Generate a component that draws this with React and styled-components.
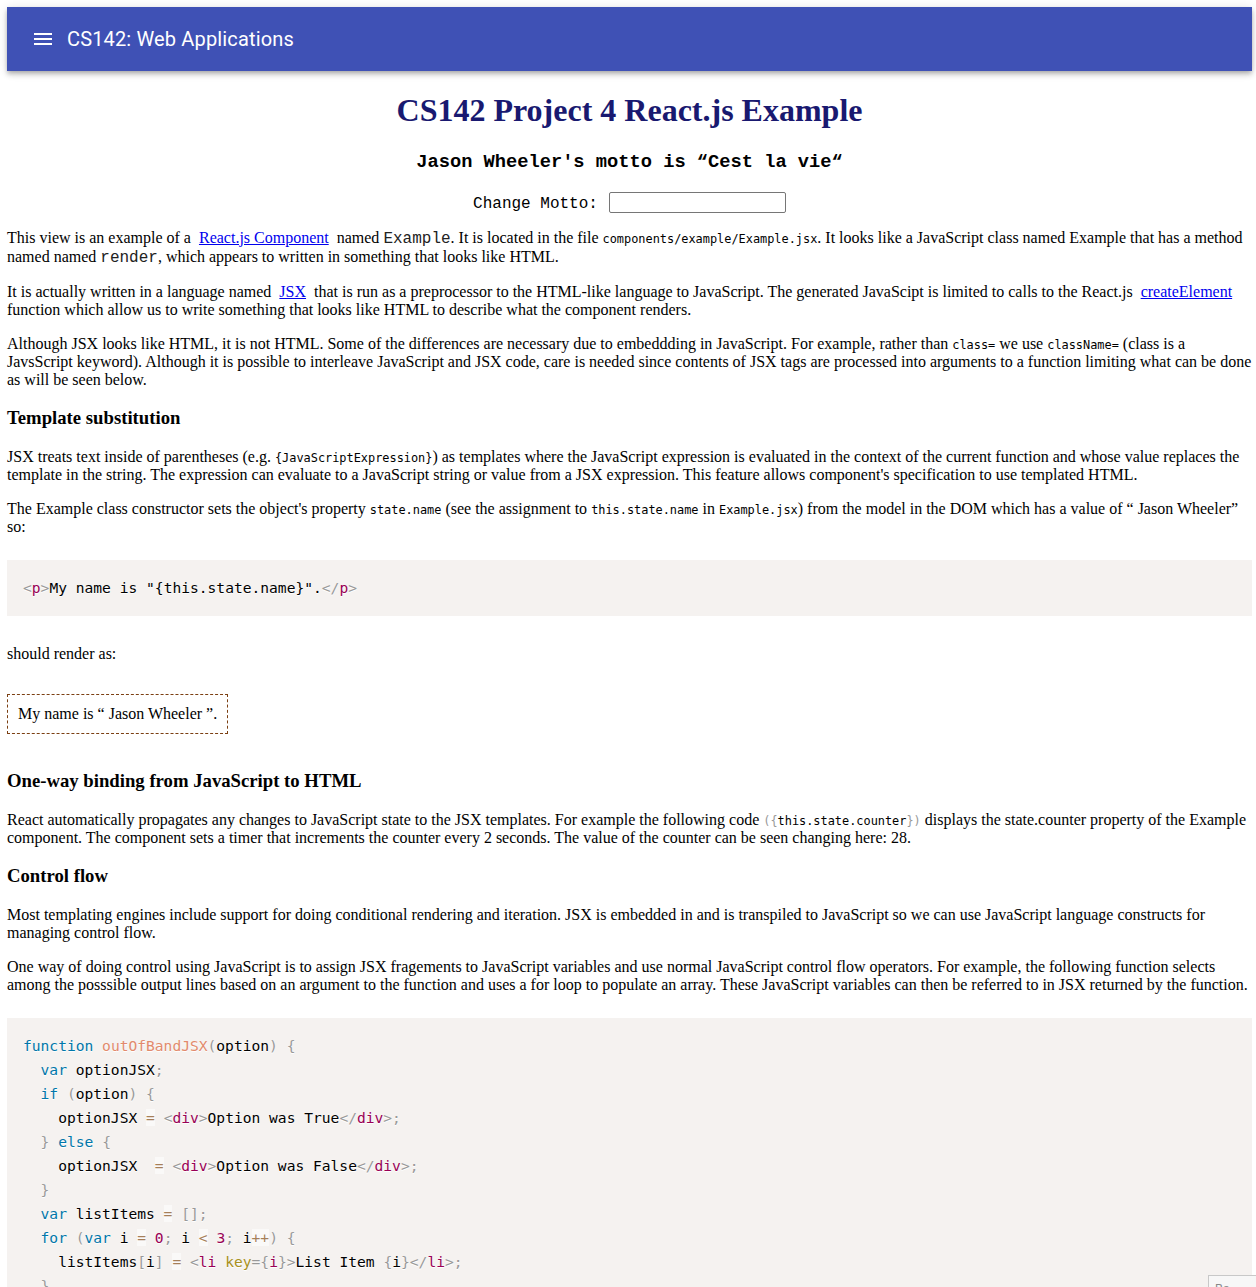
import React from "react";
import styled, { createGlobalStyle } from "styled-components";

const GlobalStyle = createGlobalStyle`
  html, body {
    margin: 0;
    padding: 0;
    background: #fff;
  }
  body {
    font-family: "Liberation Serif", "Times New Roman", serif;
    font-size: 16px;
    color: #000;
  }
`;

const Page = styled.div`
  padding: 7px 4px 0 7px;
`;

const AppBar = styled.header`
  display: flex;
  align-items: center;
  height: 64px;
  padding: 0 24px;
  background: #3f51b5;
  color: #fff;
  box-shadow: 0 2px 4px -1px rgba(0, 0, 0, 0.2), 0 4px 5px 0 rgba(0, 0, 0, 0.14),
    0 1px 10px 0 rgba(0, 0, 0, 0.12);
`;

const MenuIcon = styled.svg`
  width: 24px;
  height: 24px;
  margin-right: 12px;
  fill: #fff;
`;

const AppTitle = styled.h6`
  margin: 0;
  font-family: Roboto, "Liberation Sans", sans-serif;
  font-size: 20px;
  font-weight: 400;
  letter-spacing: 0.15px;
`;

const Title = styled.h1`
  margin: 21.44px 0;
  font-size: 32px;
  font-weight: bold;
  text-align: center;
  color: #191970;
`;

const Motto = styled.h3`
  margin: 18.72px 0;
  font-family: "Liberation Mono", "Courier New", monospace;
  font-size: 18.72px;
  font-weight: bold;
  text-align: center;
`;

const MottoRow = styled.div`
  display: flex;
  justify-content: center;
  align-items: center;
  gap: 11px;
  font-family: "Liberation Mono", "Courier New", monospace;
  font-size: 16px;
`;

const MottoLabel = styled.span`
  padding-top: 3px;
`;

const MottoInput = styled.input`
  width: 177px;
  height: 21px;
  box-sizing: border-box;
  border: 1px solid #767676;
  border-radius: 2px;
  padding: 1px 2px;
`;

const Para = styled.p`
  margin: 16px 0;
  line-height: normal;
`;

const Heading = styled.h3`
  margin: 18.72px 0;
  font-size: 18.72px;
  font-weight: bold;
`;

const Link = styled.a`
  color: #0000ee;
  text-decoration: underline;
  margin: 0 4px;
`;

const Tt = styled.code`
  font-family: "Liberation Mono", "Courier New", monospace;
  font-size: 16px;
  font-weight: 300;
  color: #222;
`;

const SmallCode = styled.code`
  font-family: "DejaVu Sans Mono", monospace;
  font-size: 11.9px;
`;

const Punct = styled.span`
  color: #999;
`;

const CodeBlock = styled.pre`
  margin: 24px 0 29px;
  padding: 16px;
  background: #f5f2f0;
  font-family: "DejaVu Sans Mono", monospace;
  font-size: 14.6px;
  line-height: 24px;
  color: #000;
  text-shadow: 0 1px #fff;
  white-space: pre;
  overflow: hidden;
`;

const tokenColors = {
  keyword: "#07a",
  fn: "#e28a6c",
  punct: "#999",
  tag: "#905",
  number: "#905",
  attr: "#a89020",
  op: "#a67f59",
};

const Tok = styled.span`
  color: ${(p) => tokenColors[p.$k] || "inherit"};
  ${(p) => (p.$k === "op" ? "background: hsla(0, 0%, 100%, 0.5);" : "")}
`;

const RenderBox = styled.div`
  display: table;
  margin: 31px 0 36px;
  padding: 10px;
  border: 1px dashed #7b3f12;
`;

const Corner = styled.div`
  position: fixed;
  left: 1208px;
  top: 1275px;
  width: 60px;
  height: 30px;
  box-sizing: border-box;
  border: 1px solid #c8c8c8;
  background: #f7f7f7;
  color: #888;
  font-family: "Liberation Sans", sans-serif;
  font-size: 12px;
  padding: 6px 6px;
`;

const K = ({ k, children }) => <Tok $k={k}>{children}</Tok>;

function Tag({ name, close }) {
  return (
    <>
      <K k="punct">{close ? "</" : "<"}</K>
      <K k="tag">{name}</K>
      <K k="punct">&gt;</K>
    </>
  );
}

function FirstCode() {
  return (
    <CodeBlock>
      <Tag name="p" />
      My name is "{"{"}this.state.name{"}"}".
      <Tag name="p" close />
    </CodeBlock>
  );
}

function SecondCode() {
  return (
    <CodeBlock>
      <K k="keyword">function</K> <K k="fn">outOfBandJSX</K>
      <K k="punct">(</K>option<K k="punct">)</K> <K k="punct">{"{"}</K>
      {"\n  "}
      <K k="keyword">var</K> optionJSX<K k="punct">;</K>
      {"\n  "}
      <K k="keyword">if</K> <K k="punct">(</K>option<K k="punct">)</K>{" "}
      <K k="punct">{"{"}</K>
      {"\n    "}optionJSX <K k="op">=</K> <Tag name="div" />
      Option was True
      <Tag name="div" close />
      <K k="punct">;</K>
      {"\n  "}
      <K k="punct">{"}"}</K> <K k="keyword">else</K> <K k="punct">{"{"}</K>
      {"\n    "}optionJSX  <K k="op">=</K> <Tag name="div" />
      Option was False
      <Tag name="div" close />
      <K k="punct">;</K>
      {"\n  "}
      <K k="punct">{"}"}</K>
      {"\n  "}
      <K k="keyword">var</K> listItems <K k="op">=</K> <K k="punct">[</K>
      <K k="punct">]</K>
      <K k="punct">;</K>
      {"\n  "}
      <K k="keyword">for</K> <K k="punct">(</K>
      <K k="keyword">var</K> i <K k="op">=</K> <K k="number">0</K>
      <K k="punct">;</K> i <K k="op">&lt;</K> <K k="number">3</K>
      <K k="punct">;</K> i<K k="op">++</K>
      <K k="punct">)</K> <K k="punct">{"{"}</K>
      {"\n    "}listItems<K k="punct">[</K>i<K k="punct">]</K> <K k="op">=</K>{" "}
      <K k="punct">&lt;</K>
      <K k="tag">li</K> <K k="attr">key</K>
      <K k="punct">=</K>
      <K k="punct">{"{"}</K>
      <K k="tag">i</K>
      <K k="punct">{"}"}</K>
      <K k="punct">&gt;</K>List Item <K k="punct">{"{"}</K>i
      <K k="punct">{"}"}</K>
      <Tag name="li" close />
      <K k="punct">;</K>
      {"\n  "}
      <K k="punct">{"}"}</K>
      {"\n  "}
      <K k="keyword">return</K> <K k="punct">(</K>
      {"\n    "}
      <Tag name="div" />
      {"\n      "}
      <K k="punct">{"{"}</K>optionJSX<K k="punct">{"}"}</K>
      {"\n    "}
      <Tag name="div" close />
      {"\n  "}
      <K k="punct">)</K>
      <K k="punct">;</K>
      {"\n"}
      <K k="punct">{"}"}</K>
    </CodeBlock>
  );
}

export default function App() {
  return (
    <>
      <GlobalStyle />
      <Page>
        <AppBar>
          <MenuIcon viewBox="0 0 24 24">
            <path d="M3 18h18v-2H3v2zm0-5h18v-2H3v2zm0-7v2h18V6H3z" />
          </MenuIcon>
          <AppTitle>CS142: Web Applications</AppTitle>
        </AppBar>

        <Title>CS142 Project 4 React.js Example</Title>
        <Motto>Jason Wheeler's motto is “Cest la vie“</Motto>
        <MottoRow>
          <MottoLabel>Change Motto:</MottoLabel>
          <MottoInput type="text" />
        </MottoRow>

        <Para>
          This view is an example of a <Link href="#">React.js Component</Link> named{" "}
          <Tt>Example</Tt>. It is located in the file{" "}
          <SmallCode>components/example/Example.jsx</SmallCode>. It looks like a
          JavaScript class named Example that has a method named named <Tt>render</Tt>,
          which appears to written in something that looks like HTML.
        </Para>
        <Para>
          It is actually written in a language named <Link href="#">JSX</Link> that is
          run as a preprocessor to the HTML-like language to JavaScript. The generated
          JavaScipt is limited to calls to the React.js{" "}
          <Link href="#">createElement</Link> function which allow us to write something
          that looks like HTML to describe what the component renders.
        </Para>
        <Para>
          Although JSX looks like HTML, it is not HTML. Some of the differences are
          necessary due to embeddding in JavaScript. For example, rather than{" "}
          <SmallCode>class=</SmallCode> we use <SmallCode>className=</SmallCode> (class is
          a JavsScript keyword). Although it is possible to interleave JavaScript and JSX
          code, care is needed since contents of JSX tags are processed into arguments to
          a function limiting what can be done as will be seen below.
        </Para>

        <Heading>Template substitution</Heading>
        <Para>
          JSX treats text inside of parentheses (e.g.{" "}
          <SmallCode>{"{JavaScriptExpression}"}</SmallCode>) as templates where the
          JavaScript expression is evaluated in the context of the current function and
          whose value replaces the template in the string. The expression can evaluate to
          a JavaScript string or value from a JSX expression. This feature allows
          component's specification to use templated HTML.
        </Para>
        <Para>
          The Example class constructor sets the object's property{" "}
          <SmallCode>state.name</SmallCode> (see the assignment to{" "}
          <SmallCode>this.state.name</SmallCode> in <SmallCode>Example.jsx</SmallCode>)
          from the model in the DOM which has a value of “ Jason Wheeler” so:
        </Para>

        <FirstCode />

        <Para>should render as:</Para>
        <RenderBox>My name is “ Jason Wheeler ”.</RenderBox>

        <Heading>One-way binding from JavaScript to HTML</Heading>
        <Para>
          React automatically propagates any changes to JavaScript state to the JSX
          templates. For example the following code{" "}
          <SmallCode>
            <Punct>({"{"}</Punct>this.state.counter<Punct>{"}"})</Punct>
          </SmallCode>{" "}
          displays the state.counter property of the Example component. The component
          sets a timer that increments the counter every 2 seconds. The value of the
          counter can be seen changing here: 28.
        </Para>

        <Heading>Control flow</Heading>
        <Para>
          Most templating engines include support for doing conditional rendering and
          iteration. JSX is embedded in and is transpiled to JavaScript so we can use
          JavaScript language constructs for managing control flow.
        </Para>
        <Para>
          One way of doing control using JavaScript is to assign JSX fragements to
          JavaScript variables and use normal JavaScript control flow operators. For
          example, the following function selects among the posssible output lines based
          on an argument to the function and uses a for loop to populate an array. These
          JavaScript variables can then be referred to in JSX returned by the function.
        </Para>

        <SecondCode />
      </Page>
      <Corner>Ba</Corner>
    </>
  );
}
